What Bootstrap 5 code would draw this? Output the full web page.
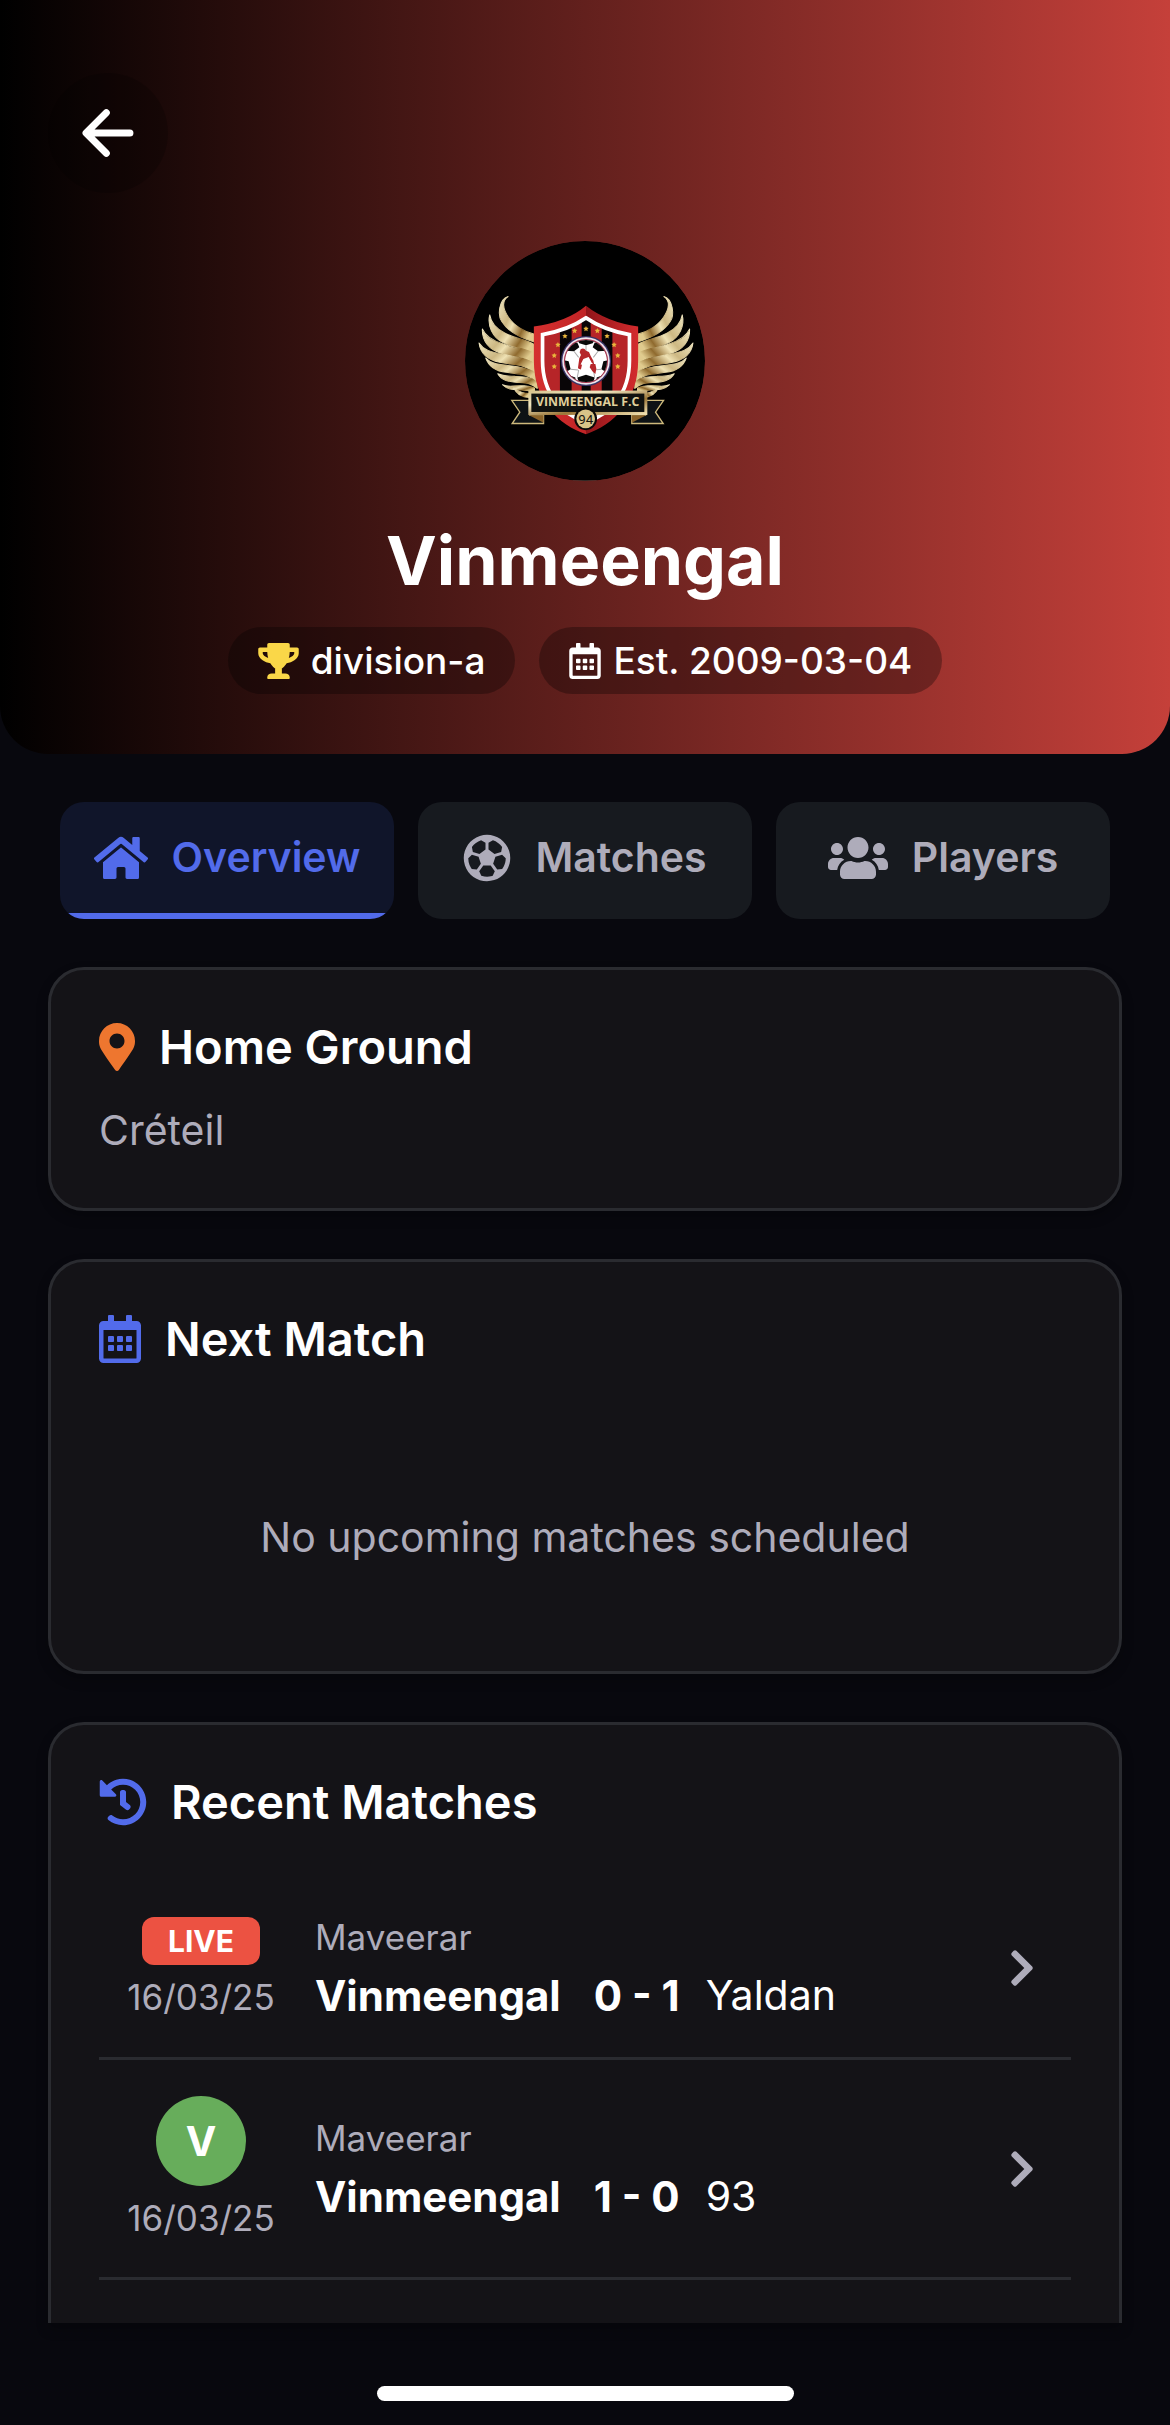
<!DOCTYPE html>
<html lang="en">
<head>
<meta charset="utf-8">
<meta name="viewport" content="width=device-width, initial-scale=1">
<title>Vinmeengal</title>
<link href="https://cdn.jsdelivr.net/npm/bootstrap@5.3.0/dist/css/bootstrap.min.css" rel="stylesheet">
<style>
  body { background: #08080e; color: #fff; font-family: Inter, "Liberation Sans", sans-serif; font-size: 41px; line-height: 51px; }
  svg { display: block; flex-shrink: 0; fill: currentColor; }
  .muted { color: #aeacba; }
  .small-text { font-size: 35px; line-height: 45px; }
  .club-header { background: linear-gradient(90deg, #000, #c5403a); border-radius: 0 0 48px 48px; padding: 73px 48px 60px; }
  .back-btn { width: 120px; height: 120px; background: rgba(0,0,0,.2); }
  .crest { width: 240px; height: 240px; margin-top: 48px; }
  .club-name { font-size: 68px; line-height: 86px; font-weight: 700; margin: 36px 0 24px; }
  .pill { background: rgba(0,0,0,.3); border-radius: 36px; padding: 12px 30px; gap: 12px; font-size: 37px; line-height: 43px; font-weight: 500; }
  .tab-row { padding: 48px 60px; gap: 24px; }
  .tab-btn { flex: 1 1 0; gap: 24px; padding: 30px 0 36px; border: 0; border-radius: 24px; background: #171a1f; color: #aeacba; font-weight: 600; }
  .tab-btn.active { color: #526bea; background: linear-gradient(#526bea, #526bea) bottom / 100% 6px no-repeat #10152a; }
  .cards { padding: 0 48px; gap: 48px; }
  .panel { background: #141317; border: 3px solid #2a2b30; border-radius: 36px; padding: 48px; box-shadow: 0 6px 12px rgba(0,0,0,.25); }
  .panel-cut { border-bottom: 0; border-radius: 36px 36px 0 0; padding-bottom: 43px; }
  .panel h2 { font-size: 47px; line-height: 58px; font-weight: 600; gap: 24px; margin: 0; }
  .ground { line-height: 60px; margin: 24px 0 0; }
  .empty { padding: 60px 0; margin: 84px 0 0; }
  .match-list { margin-top: 48px; }
  .match { padding: 36px 36px 36px 12px; gap: 24px; border-bottom: 3px solid #2a2b30; color: #fff; text-decoration: none; }
  .when { width: 180px; gap: 10px; }
  .live { background: #ec5242; border-radius: 12px; width: 118px; font-size: 30px; line-height: 48px; font-weight: 700; }
  .win { background: #67ad5b; width: 90px; font-size: 41px; line-height: 90px; font-weight: 700; }
  .teams { gap: 10px; }
  .teams b { font-size: 42px; }
  .teams .score { margin: 0 26px 0 33px; }
  .home-bar { padding: 63px 0 24px; }
  .home-bar div { width: 417px; height: 15px; }
</style>
</head>
<body>
<header class="club-header">
  <button type="button" class="back-btn btn rounded-circle border-0 p-0 text-white d-flex align-items-center justify-content-center" aria-label="Back">
    <svg width="72" height="72" viewBox="0 0 512 512" style="fill:none" stroke="currentColor" stroke-width="50" stroke-linecap="round" stroke-linejoin="round"><path d="M244 400 100 256l144-144M120 256h292"/></svg>
  </button>
  <div class="d-flex flex-column align-items-center">
    <svg class="crest" viewBox="76 62 718 718" role="img" aria-label="Club crest">
      <defs>
        <linearGradient id="gold" x1="0" y1="0" x2="1" y2="1"><stop offset="0" stop-color="#d8c690"/><stop offset=".3" stop-color="#f1e8c2"/><stop offset=".65" stop-color="#9a7638"/><stop offset="1" stop-color="#efdfae"/></linearGradient>
        <linearGradient id="feather" x1="0" y1="0" x2="1" y2=".6"><stop offset="0" stop-color="#f0e6c0"/><stop offset=".4" stop-color="#cdb883"/><stop offset=".55" stop-color="#efe2b4"/><stop offset=".8" stop-color="#8f6a2e"/><stop offset="1" stop-color="#e0cb8e"/></linearGradient>
        <linearGradient id="red" x1="0" x2="1"><stop offset="0" stop-color="#d5302f"/><stop offset=".5" stop-color="#c02426"/><stop offset=".5" stop-color="#8f1519"/><stop offset="1" stop-color="#d42b2d"/></linearGradient>
        <clipPath id="disc"><circle cx="435" cy="421" r="359"/></clipPath>
        <clipPath id="field"><path d="M438 292Q490 328 568 342V420C568 520 510 580 438 605C366 580 308 520 308 420V342Q386 328 438 292Z"/></clipPath>
        <clipPath id="ball"><circle cx="438" cy="421" r="63"/></clipPath>
        <g id="wing" fill="url(#feather)" stroke="url(#feather)" stroke-width="3" stroke-linejoin="round">
          <path d="M205 228C177 236 173 285 186 303C206 335 245 353 284 364V341C253 334 222 314 206 290C188 264 186 240 205 228Z"/>
          <path d="M150 283C142 315 158 350 190 366C225 384 250 382 284 400V372C258 356 225 354 196 338C168 324 154 308 150 283Z"/>
          <path d="M128 325C126 362 150 387 182 397C220 409 250 404 284 429V399C256 382 222 383 190 370C158 360 138 348 128 325Z"/>
          <path d="M118 367C122 400 146 418 180 425C220 434 250 428 286 456V430C258 411 225 409 190 401C152 394 132 388 118 367Z"/>
          <path d="M138 412C148 440 170 452 200 455C235 461 260 456 288 482V458C262 440 232 438 200 434C168 430 152 426 138 412Z"/>
          <path d="M174 459C186 480 208 483 232 485C258 487 272 486 292 503V484C272 468 250 468 226 467C204 467 190 466 174 459Z"/>
          <path d="M188 492C204 508 224 507 244 508C258 509 270 509 284 513V502C262 493 240 494 220 496C208 497 198 496 188 492Z"/>
          <path d="M222 502C230 520 244 530 268 530V518C250 518 236 512 222 502Z"/>
        </g>
        <g id="tail">
          <path d="M216 539H270V583H311V608H217L240 574Z" fill="#0d1215" stroke="#cdb97c" stroke-width="4"/>
          <path d="M268 583H311V606Z" fill="#8b642a"/>
        </g>
        <path id="star" d="M0-8 2-3 8-2 4 2 5 8 0 5-5 8-4 2-8-2-2-3Z" fill="#e8b53c"/>
      </defs>
      <g clip-path="url(#disc)">
        <circle cx="435" cy="421" r="359" fill="#000"/>
        <path d="M398 779h72v4h-72z" fill="#b9a296"/>
        <use href="#wing"/><use href="#wing" transform="matrix(-1 0 0 1 876 0)"/>
        <use href="#tail"/><use href="#tail" transform="matrix(-1 0 0 1 886 0)"/>
        <path d="M438 256Q500 305 594 318V420C594 540 520 612 438 640C356 612 282 540 282 420V318Q380 305 438 256Z" fill="url(#red)"/>
        <g clip-path="url(#field)"><path d="M300 280h280v340H300z" fill="#b62528"/><path d="M360 280h35v340h-35zM425 280h27v340h-27zM485 280h32v340h-32z" fill="#090507"/></g>
        <path d="M438 292Q490 328 568 342V420C568 520 510 580 438 605C366 580 308 520 308 420V342Q386 328 438 292Z" fill="none" stroke="#fff" stroke-width="11"/>
        <use href="#star" x="438" y="324"/><use href="#star" x="404" y="330"/><use href="#star" x="472" y="330"/><use href="#star" x="375" y="346"/><use href="#star" x="501" y="346"/><use href="#star" x="354" y="372"/><use href="#star" x="522" y="372"/><use href="#star" x="343" y="404"/><use href="#star" x="533" y="404"/><use href="#star" x="343" y="437"/><use href="#star" x="533" y="437"/>
        <circle cx="438" cy="421" r="75" fill="#383468"/><circle cx="438" cy="421" r="71" fill="#eee5ec"/><circle cx="438" cy="421" r="66" fill="#a73750"/>
        <g clip-path="url(#ball)">
          <circle cx="438" cy="421" r="63" fill="#fff"/>
          <g fill="#090909"><path d="M412 358 438 354 464 358 458 368 438 374 418 368Z"/><path d="M386 366 412 366 418 380 402 392 376 390Z"/><path d="M490 366 464 366 458 380 474 392 500 390Z"/><path d="M370 418 386 422 392 446 374 456Z"/><path d="M506 418 490 422 484 446 502 456Z"/><path d="M412 470 438 462 464 470 458 490H418Z"/><path d="M388 464 406 470 408 484H388ZM488 464 470 470 468 484H488Z"/></g>
          <path d="M438 374v20M402 392l14 18M474 392l-14 18M392 446l22 2M484 446l-22 2M412 470l4-22M464 470l-4-22" stroke="#aaa" stroke-width="3"/>
        </g>
        <path d="M422 386q10-6 16 4l9 4 5 12 8 14 3 14-8-8-9-17-16 6-9 18 1 14-8-6 4-28 5-10-4-8zM452 430l14 0 3 14-3 16-9-8-8-12zM416 430l10 2-3 14-8-2z" fill="#b6262a"/>
        <rect x="270" y="514" width="347" height="64" fill="#10120f" stroke="url(#gold)" stroke-width="9"/>
        <text x="443" y="556" text-anchor="middle" font-family="Open Sans, sans-serif" font-size="37" font-weight="700" fill="#e0d09b">VINMEENGAL F.C</text>
        <circle cx="437" cy="594" r="34" fill="#0a0908"/><circle cx="437" cy="594" r="28" fill="#d9c488"/>
        <text x="437" y="609" text-anchor="middle" font-family="Roboto, sans-serif" font-size="40" fill="#17120c">94</text>
      </g>
    </svg>
    <h1 class="club-name">Vinmeengal</h1>
    <div class="d-flex gap-4">
      <div class="pill d-flex align-items-center">
        <svg width="41" height="36" viewBox="0 0 576 512" color="#fad748"><path d="M552 64H448V24c0-13.300-10.700-24-24-24H152c-13.300 0-24 10.700-24 24v40H24C10.700 64 0 74.700 0 88v56c0 35.700 22.500 72.400 61.900 100.700 31.500 22.700 69.800 37.100 110 41.700C203.300 338.500 240 360 240 360v72h-48c-35.300 0-64 20.700-64 56v12c0 6.600 5.400 12 12 12h296c6.600 0 12-5.400 12-12v-12c0-35.300-28.700-56-64-56h-48v-72s36.700-21.500 68.100-73.600c40.300-4.600 78.600-19 110-41.700 39.300-28.300 61.900-65 61.900-100.700V88c0-13.300-10.700-24-24-24zM99.300 192.800C74.900 175.200 64 155.600 64 144v-16h64.200c1 32.600 5.800 61.200 12.800 86.200-15.100-5.200-29.200-12.400-41.700-21.400zM512 144c0 16.100-17.700 36.100-35.300 48.800-12.500 9-26.700 16.200-41.800 21.400 7-25 11.800-53.600 12.800-86.200H512v16z"/></svg>
        <span>division-a</span>
      </div>
      <div class="pill d-flex align-items-center">
        <svg width="32" height="36" viewBox="0 0 448 512"><path id="calendar" d="M148 288h-40c-6.600 0-12-5.400-12-12v-40c0-6.600 5.400-12 12-12h40c6.600 0 12 5.400 12 12v40c0 6.600-5.400 12-12 12zm108-12v-40c0-6.600-5.400-12-12-12h-40c-6.600 0-12 5.400-12 12v40c0 6.600 5.400 12 12 12h40c6.600 0 12-5.400 12-12zm96 0v-40c0-6.600-5.400-12-12-12h-40c-6.600 0-12 5.400-12 12v40c0 6.600 5.400 12 12 12h40c6.600 0 12-5.400 12-12zm-96 96v-40c0-6.600-5.400-12-12-12h-40c-6.600 0-12 5.400-12 12v40c0 6.600 5.400 12 12 12h40c6.600 0 12-5.400 12-12zm-96 0v-40c0-6.600-5.400-12-12-12h-40c-6.600 0-12 5.400-12 12v40c0 6.600 5.400 12 12 12h40c6.600 0 12-5.400 12-12zm192 0v-40c0-6.600-5.400-12-12-12h-40c-6.600 0-12 5.400-12 12v40c0 6.600 5.400 12 12 12h40c6.600 0 12-5.400 12-12zm96-260v352c0 26.500-21.500 48-48 48H48c-26.500 0-48-21.500-48-48V112c0-26.500 21.500-48 48-48h48V12c0-6.600 5.400-12 12-12h40c6.600 0 12 5.400 12 12v52h128V12c0-6.600 5.400-12 12-12h40c6.600 0 12 5.400 12 12v52h48c26.500 0 48 21.500 48 48zm-48 346V160H48v298c0 3.300 2.700 6 6 6h340c3.300 0 6-2.700 6-6z"/></svg>
        <span>Est. 2009-03-04</span>
      </div>
    </div>
  </div>
</header>

<nav class="tab-row d-flex" aria-label="Team sections">
  <button type="button" class="tab-btn active d-flex align-items-center justify-content-center">
    <svg width="54" height="48" viewBox="0 0 576 512"><path d="M280.370 148.260L96 300.110V464a16 16 0 0 0 16 16l112.060-.29a16 16 0 0 0 15.920-16V368a16 16 0 0 1 16-16h64a16 16 0 0 1 16 16v95.640a16 16 0 0 0 16 16.050L464 480a16 16 0 0 0 16-16V300L295.670 148.260a12.190 12.190 0 0 0-15.300 0zM571.600 251.470L488 182.560V44.050a12 12 0 0 0-12-12h-56a12 12 0 0 0-12 12v72.610L318.470 43a48 48 0 0 0-61 0L4.340 251.470a12 12 0 0 0-1.600 16.900l25.500 31A12 12 0 0 0 45.150 301l235.220-193.740a12.190 12.190 0 0 1 15.300 0L530.900 301a12 12 0 0 0 16.900-1.600l25.500-31a12 12 0 0 0-1.700-16.930z"/></svg>
    <span>Overview</span>
  </button>
  <button type="button" class="tab-btn d-flex align-items-center justify-content-center">
    <svg width="48" height="48" viewBox="-8 0 512 512"><path d="M483.800 179.400C449.800 74.600 352.600 8 248.100 8c-25.400 0-51.200 3.900-76.700 12.200C41.200 62.500-30.100 202.400 12.200 332.600 46.200 437.400 143.400 504 247.900 504c25.400 0 51.200-3.900 76.700-12.200 130.200-42.300 201.500-182.200 159.200-312.400zm-74.500 193.700l-52.200 6.400-43.700-60.900 24.400-75.200 71.100-22.100 38.900 36.400c-.2 30.700-7.400 61.100-21.700 89.200-4.700 9.300-10.700 17.800-16.800 26.200zm0-235.400l-10.400 53.100-70.700 22-64.200-46.500V92.500l47.400-26.200c39.200 13 73.400 38 97.900 71.400zM184.900 66.400L232 92.500v73.800l-64.200 46.500-70.600-22-10.100-52.500c24.300-33.400 57.900-58.600 97.800-71.900zM139 379.500L85.900 373c-14.400-20.100-37.300-59.600-37.800-115.300l39-36.400 71.100 22.200 24.300 74.300-43.500 61.700zm48.200 67l-22.400-48.100 43.600-61.700H287l44.300 61.700-22.400 48.100c-6.200 1.800-57.600 20.400-121.700 0z"/></svg>
    <span>Matches</span>
  </button>
  <button type="button" class="tab-btn d-flex align-items-center justify-content-center">
    <svg width="60" height="48" viewBox="0 0 640 512"><path d="M96 224c35.300 0 64-28.700 64-64s-28.700-64-64-64-64 28.700-64 64 28.700 64 64 64zm448 0c35.300 0 64-28.700 64-64s-28.700-64-64-64-64 28.700-64 64 28.700 64 64 64zm32 32h-64c-17.600 0-33.500 7.100-45.100 18.600 40.300 22.100 68.900 62 75.100 109.400h66c17.700 0 32-14.300 32-32v-32c0-35.300-28.700-64-64-64zm-256 0c61.900 0 112-50.100 112-112S381.900 32 320 32 208 82.100 208 144s50.100 112 112 112zm76.800 32h-8.300c-20.800 10-43.900 16-68.500 16s-47.600-6-68.500-16h-8.300C179.600 288 128 339.600 128 403.200V432c0 26.500 21.500 48 48 48h288c26.500 0 48-21.500 48-48v-28.800c0-63.600-51.600-115.200-115.200-115.200zm-223.700-13.400C161.500 263.100 145.600 256 128 256H64c-35.300 0-64 28.700-64 64v32c0 17.700 14.300 32 32 32h65.900c6.300-47.400 34.900-87.300 75.200-109.400z"/></svg>
    <span>Players</span>
  </button>
</nav>

<main class="cards d-flex flex-column">
  <section class="panel">
    <h2 class="d-flex align-items-center">
      <svg width="36" height="48" viewBox="0 0 384 512" color="#ee762f"><path d="M172.268 501.670C26.970 291.031 0 269.413 0 192 0 85.961 85.961 0 192 0s192 85.961 192 192c0 77.413-26.970 99.031-172.268 309.670-9.535 13.774-29.930 13.773-39.464 0zM192 272c44.183 0 80-35.817 80-80s-35.817-80-80-80-80 35.817-80 80 35.817 80 80 80z"/></svg>
      Home Ground
    </h2>
    <p class="ground muted">Créteil</p>
  </section>

  <section class="panel">
    <h2 class="d-flex align-items-center">
      <svg width="42" height="48" viewBox="0 0 448 512" color="#526bea"><use href="#calendar"/></svg>
      Next Match
    </h2>
    <p class="empty muted text-center">No upcoming matches scheduled</p>
  </section>

  <section class="panel panel-cut">
    <h2 class="d-flex align-items-center">
      <svg width="48" height="48" viewBox="0 0 512 512" color="#526bea"><path d="M504 255.531c.253 136.640-111.180 248.372-247.820 248.468-59.015.042-113.223-20.530-155.822-54.911-11.077-8.940-11.905-25.541-1.839-35.607l11.267-11.267c8.609-8.609 22.353-9.551 31.891-1.984C173.062 425.135 212.781 440 256 440c101.705 0 184-82.311 184-184 0-101.705-82.311-184-184-184-48.814 0-93.149 18.969-126.068 49.932l50.754 50.754c10.080 10.080 2.941 27.314-11.313 27.314H24c-8.837 0-16-7.163-16-16V38.627c0-14.254 17.234-21.393 27.314-11.314l49.372 49.372C129.209 34.136 189.552 8 256 8c136.810 0 247.747 110.780 248 247.531zm-180.912 78.784l9.823-12.630c8.138-10.463 6.253-25.542-4.210-33.679L288 256.349V152c0-13.255-10.745-24-24-24h-16c-13.255 0-24 10.745-24 24v135.651l65.409 50.874c10.463 8.137 25.541 6.253 33.679-4.210z"/></svg>
      Recent Matches
    </h2>
    <div class="match-list">
      <a href="#" class="match d-flex align-items-center">
        <div class="when d-flex flex-column align-items-center">
          <span class="live text-center">LIVE</span>
          <span class="small-text muted">16/03/25</span>
        </div>
        <div class="teams d-flex flex-column flex-grow-1">
          <span class="small-text muted">Maveerar</span>
          <div class="d-flex"><b>Vinmeengal</b><b class="score">0 - 1</b><span>Yaldan</span></div>
        </div>
        <svg class="muted" width="26" height="42" viewBox="0 0 320 512"><path id="chevron" d="M285.476 272.971L91.132 467.314c-9.373 9.373-24.569 9.373-33.941 0l-22.667-22.667c-9.357-9.357-9.375-24.522-.04-33.901L188.505 256 34.484 101.255c-9.335-9.379-9.317-24.544.04-33.901l22.667-22.667c9.373-9.373 24.569-9.373 33.941 0L285.475 239.030c9.373 9.372 9.373 24.568.001 33.941z"/></svg>
      </a>
      <a href="#" class="match d-flex align-items-center">
        <div class="when d-flex flex-column align-items-center">
          <span class="win rounded-circle text-center">V</span>
          <span class="small-text muted">16/03/25</span>
        </div>
        <div class="teams d-flex flex-column flex-grow-1">
          <span class="small-text muted">Maveerar</span>
          <div class="d-flex"><b>Vinmeengal</b><b class="score">1 - 0</b><span>93</span></div>
        </div>
        <svg class="muted" width="26" height="42" viewBox="0 0 320 512"><use href="#chevron"/></svg>
      </a>
    </div>
  </section>
</main>

<footer class="home-bar d-flex justify-content-center"><div class="bg-white rounded-pill"></div></footer>
<script src="https://cdn.jsdelivr.net/npm/bootstrap@5.3.0/dist/js/bootstrap.bundle.min.js"></script>
</body>
</html>
